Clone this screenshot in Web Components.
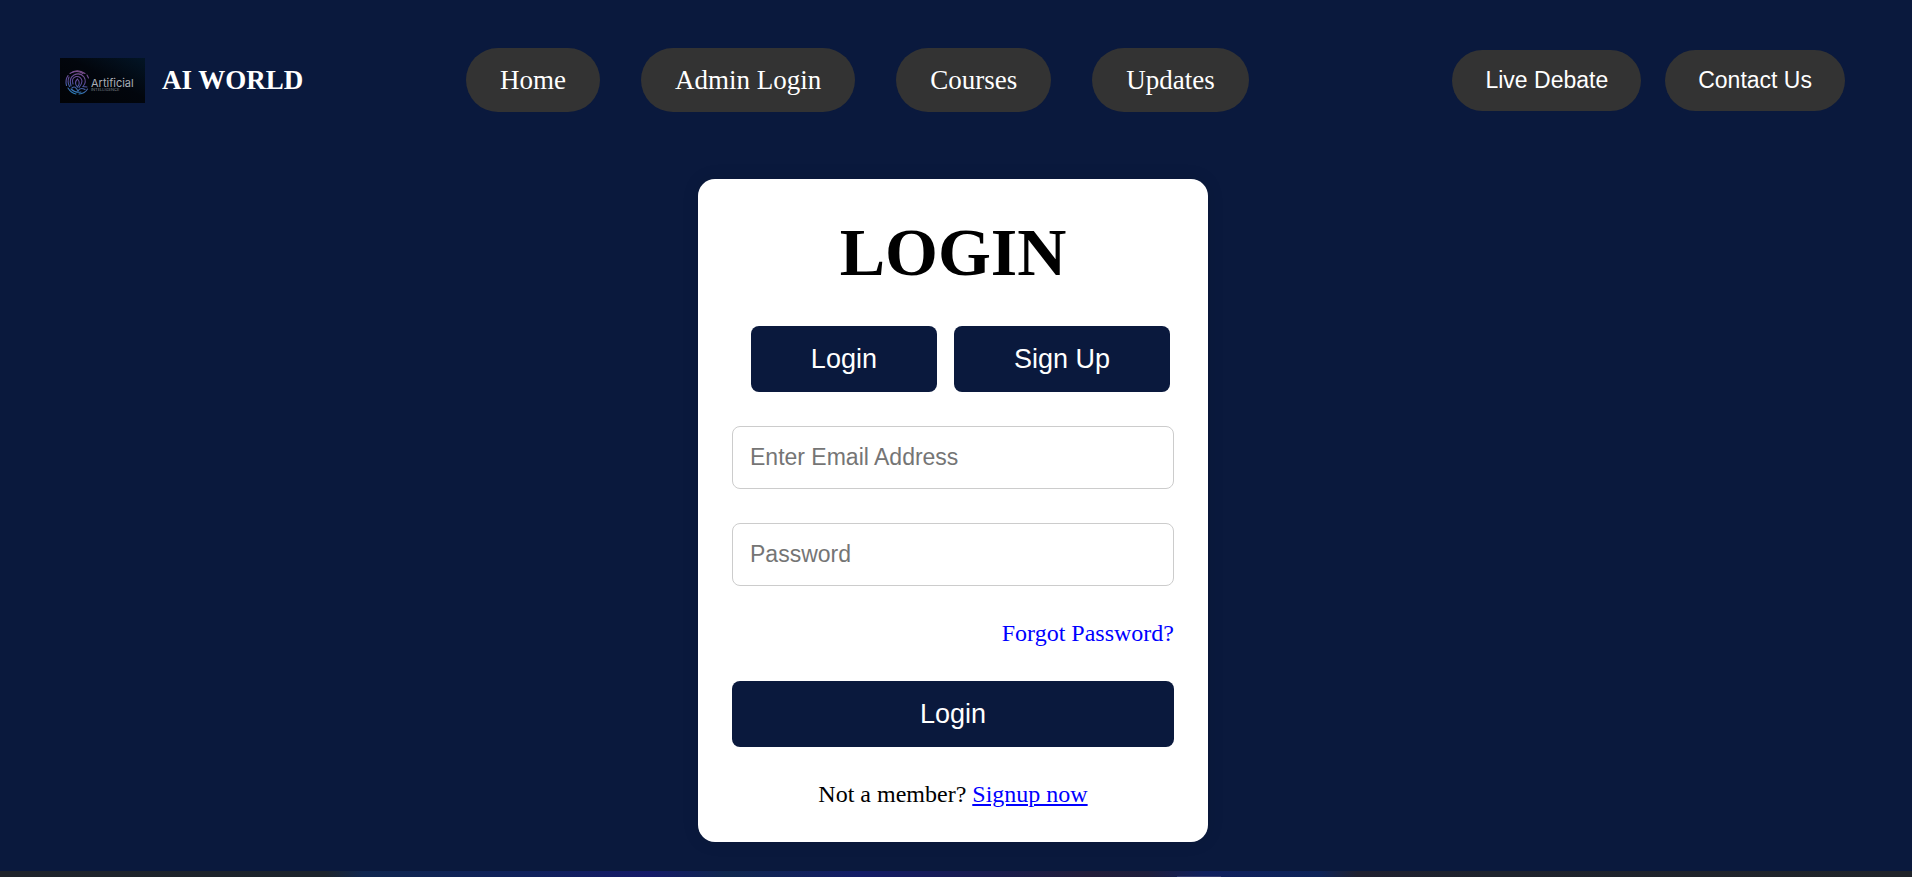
<!DOCTYPE html>
<html lang="en">
<head>
<meta charset="utf-8">
<title>AI World</title>
<style>
  :root {
    --navy: #0a193d;
    --pill: #333333;
    --serif: "Liberation Serif", "Times New Roman", serif;
    --sans: "Liberation Sans", Arial, sans-serif;
  }
  body { margin: 0; background: var(--navy); font-family: var(--serif); }
</style>
</head>
<body>
<ai-page>
  <ai-header slot="header">
    <ai-logo slot="brand">AI WORLD</ai-logo>
    <nav-pill slot="nav" href="#home">Home</nav-pill>
    <nav-pill slot="nav" href="#admin">Admin Login</nav-pill>
    <nav-pill slot="nav" href="#courses">Courses</nav-pill>
    <nav-pill slot="nav" href="#updates">Updates</nav-pill>
    <action-pill slot="actions">Live Debate</action-pill>
    <action-pill slot="actions">Contact Us</action-pill>
  </ai-header>
  <login-card></login-card>
  <hero-strip slot="footer"></hero-strip>
</ai-page>

<script>
function define(name, html, setup) {
  const template = document.createElement('template');
  template.innerHTML = html;
  customElements.define(name, class extends HTMLElement {
    constructor() {
      super();
      this.attachShadow({ mode: 'open' }).append(template.content.cloneNode(true));
    }
    connectedCallback() {
      if (setup) setup(this, this.shadowRoot);
    }
  });
}

define('ai-page', `
  <style>
    :host { display: flex; flex-direction: column; min-height: 100vh; }
    main { flex: 1; display: flex; justify-content: center; align-items: flex-start; padding: 19px 12px 29px 6px; }
  </style>
  <slot name="header"></slot>
  <main><slot></slot></main>
  <slot name="footer"></slot>`);

define('ai-header', `
  <style>
    :host { display: block; }
    header { display: flex; align-items: center; justify-content: space-between; padding: 48px 67px 48px 60px; }
    nav { display: flex; gap: 41px; padding-right: 41px; }
    .actions { display: flex; gap: 24px; }
    nav, .actions { flex-wrap: wrap; }
  </style>
  <header>
    <slot name="brand"></slot>
    <nav aria-label="Main"><slot name="nav"></slot></nav>
    <div class="actions"><slot name="actions"></slot></div>
  </header>`);

define('ai-logo', `
  <style>
    :host { display: flex; align-items: center; gap: 17px; color: #fff; font-size: 27px; font-weight: 700; line-height: 32px; white-space: nowrap; }
    svg { display: block; width: 85px; height: 45px; }
    text { font-family: Inter, sans-serif; font-weight: 400; }
  </style>
  <svg viewBox="0 0 85 45" aria-hidden="true">
    <defs>
      <linearGradient id="bg" x1="0" y1="1" x2="1" y2="0">
        <stop offset="0" stop-color="#020306"/><stop offset=".55" stop-color="#02060d"/><stop offset="1" stop-color="#031526"/>
      </linearGradient>
      <linearGradient id="ink" gradientUnits="userSpaceOnUse" x1="20" y1="11" x2="14" y2="37">
        <stop offset="0" stop-color="#85508c"/><stop offset=".5" stop-color="#5a4a9a"/><stop offset="1" stop-color="#2684bd"/>
      </linearGradient>
    </defs>
    <rect width="85" height="45" fill="url(#bg)"/>
    <g fill="none" stroke="url(#ink)" stroke-width="1.1" stroke-linecap="round">
      <path d="M10 15.500Q17 10 25 15.500M27 17l1.500 3M8 17.500Q5 22 6.500 27.500M8 30Q11 35 16 36M19 36Q25 35.500 27.500 31"/>
      <path d="M12 14.500Q18 12 23 15.500M9 19Q7 24 9.500 28.500M11 31Q15 35 21 34"/>
      <path d="M11 28Q8.500 20 14 17Q20 14 24 19Q27 24 23 28.500L27 29M13 26Q11 20 16 18.500Q21 18 22 23Q22 26 19 29.500M12 30Q15 27 18 33Q20 29 25 31.500"/>
      <path d="M17.500 21Q13.500 25 17.500 29Q21 25 17.500 21Z"/>
    </g>
    <text x="31" y="29" font-size="11" fill="#a9aeb6">Artificial</text>
    <text x="31" y="33" font-size="4" fill="#7d838d">INTELLIGENCE</text>
  </svg>
  <span><slot></slot></span>`);

define('nav-pill', `
  <style>
    :host { display: block; }
    a { display: block; padding: 16px 34px; border-radius: 32px; background: var(--pill); color: #fff; font-size: 27px; line-height: 32px; text-decoration: none; white-space: nowrap; }
  </style>
  <a><slot></slot></a>`, (host, root) => {
    root.querySelector('a').href = host.getAttribute('href');
  });

define('action-pill', `
  <style>
    :host { display: block; }
    button { display: block; border: 0; margin: 0; padding: 17px 33px; border-radius: 32px; background: var(--pill); color: #fff; font: 23px/27px var(--sans); white-space: nowrap; }
  </style>
  <button type="button"><slot></slot></button>`);

define('login-card', `
  <style>
    :host { display: block; box-sizing: border-box; width: 510px; max-width: 100%; padding: 34px; border-radius: 17px; background: #fff; color: #000; box-shadow: 0 0 17px rgba(0, 0, 0, .1); }
    h1 { margin: 0 0 34px; font-size: 68px; line-height: 79px; font-weight: 700; text-align: center; }
    .tabs { display: flex; justify-content: flex-end; gap: 17px; padding-right: 4px; margin-bottom: 34px; }
    button { border: 0; margin: 0; padding: 17px 0; border-radius: 8px; background: var(--navy); color: #fff; font: 27px/32px var(--sans); }
    .tabs button { padding: 17px 60px; white-space: nowrap; }
    form { display: flex; flex-direction: column; gap: 34px; margin: 0; }
    input { display: block; box-sizing: border-box; width: 100%; height: 63px; margin: 0; padding: 17px; border: 1px solid #ccc; border-radius: 8px; background: #fff; font: 23px/27px var(--sans); }
    input::placeholder { color: #757575; opacity: 1; }
    a { color: #00f; }
    .forgot { align-self: flex-end; text-decoration: none; }
    .forgot, p { font-size: 24px; line-height: 27px; }
    p { margin: 0; text-align: center; }
  </style>
  <h1>LOGIN</h1>
  <div class="tabs">
    <button type="button">Login</button>
    <button type="button">Sign Up</button>
  </div>
  <form>
    <input type="email" placeholder="Enter Email Address" aria-label="Email address">
    <input type="password" placeholder="Password" aria-label="Password">
    <a class="forgot" href="#forgot">Forgot Password?</a>
    <button type="submit">Login</button>
    <p>Not a member? <a href="#signup">Signup now</a></p>
  </form>`);

define('hero-strip', `
  <style>
    :host {
      display: block; height: 6px;
      background:
        linear-gradient(#343c70, #343c70) 63% 100% / 44px 1px no-repeat,
        linear-gradient(90deg, #1f242b 0%, #1c242c 17%, #10264f 19%, #10215c 28%, #151a68 34%, #10284f 38%, #131c66 45%, #191c4d 52%, #221d3a 57%, #1e1e3c 60%, #10205e 63%, #0d2358 69%, #1f2030 71%, #1e232d 78%, #20242a 100%);
    }
  </style>`);
</script>
</body>
</html>
